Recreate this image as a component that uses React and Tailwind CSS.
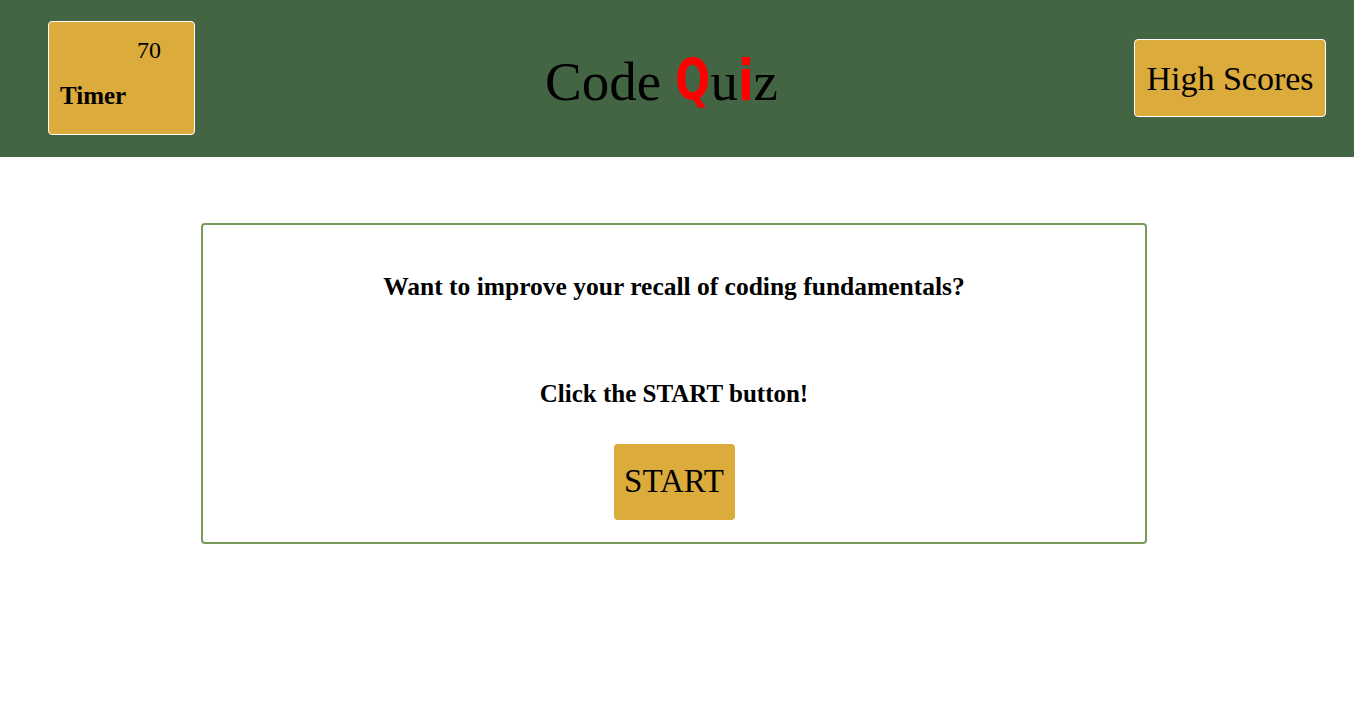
export default function App() {
  const redLetter = { fontFamily: '"DejaVu Sans Condensed", "DejaVu Sans", sans-serif' };
  return (
    <div className="min-h-screen bg-white" style={{ fontFamily: '"Liberation Serif", serif' }}>
      {/* header */}
      <header className="h-[157px] bg-[#436544] flex items-start justify-between pl-[48px] pr-[28px]">
        <div className="mt-[21px] w-[147px] h-[114px] bg-[#dbab3b] border border-white rounded-[4px] relative">
          <span className="absolute left-[88px] top-[10px] text-[24px] text-black">70</span>
          <span className="absolute left-[11px] top-[55px] text-[25px] font-bold text-black">Timer</span>
        </div>
        <h1 className="mt-[52px] text-[55px] leading-none text-black -ml-[6px]">
          Code{" "}
          <span className="inline-block text-[#ff0000] font-bold text-[57px] scale-x-[0.8] -mx-[4px]" style={redLetter}>Q</span>
          u
          <span className="inline-block text-[#ff0000] font-bold text-[57px] scale-x-[0.9] -mx-[1px]" style={redLetter}>i</span>
          z
        </h1>
        <button className="mt-[39px] w-[192px] h-[78px] bg-[#dbab3b] border border-white rounded-[4px] text-[34px] text-black">
          High Scores
        </button>
      </header>

      {/* main card */}
      <main className="pt-[66px]">
        <div className="w-[946px] ml-[201px] h-[321px] border-2 border-[#779a5b] rounded-[4px] flex flex-col items-center">
          <p className="mt-[43px] text-[25.5px] font-bold text-black">
            Want to improve your recall of coding fundamentals?
          </p>
          <p className="mt-[69px] text-[25px] font-bold text-black">Click the START button!</p>
          <button className="mt-[31px] w-[121px] h-[76px] bg-[#dbab3b] rounded-[4px] text-[33px] text-black">
            START
          </button>
        </div>
      </main>
    </div>
  );
}
